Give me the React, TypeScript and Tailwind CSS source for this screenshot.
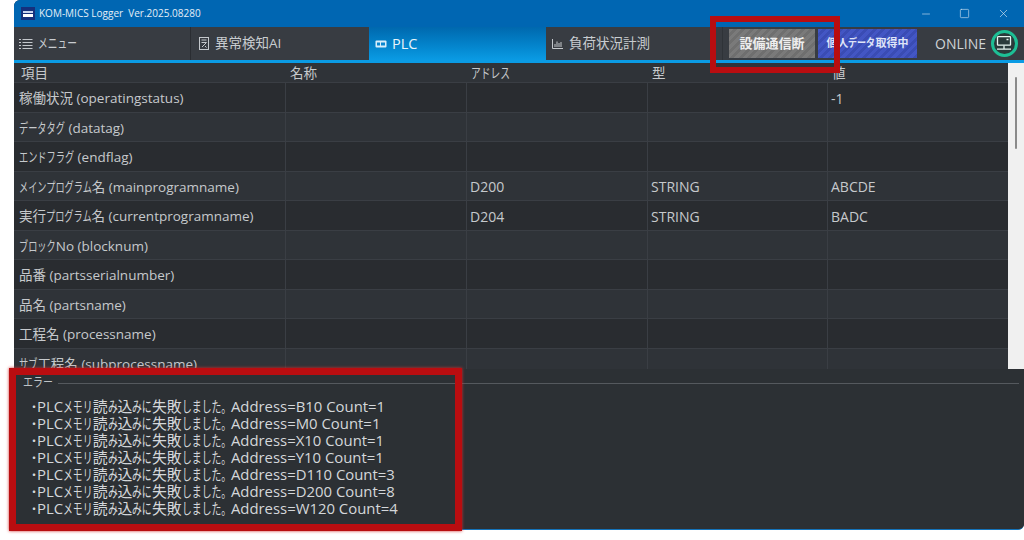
import { Minus, Square, X } from 'lucide-react';

const rows = [
  { label: '稼働状況 (operatingstatus)', addr: '', type: '', value: '-1' },
  { label: 'データタグ (datatag)', addr: '', type: '', value: '' },
  { label: 'エンドフラグ (endflag)', addr: '', type: '', value: '' },
  { label: 'メインプログラム名 (mainprogramname)', addr: 'D200', type: 'STRING', value: 'ABCDE' },
  { label: '実行プログラム名 (currentprogramname)', addr: 'D204', type: 'STRING', value: 'BADC' },
  { label: 'ブロックNo (blocknum)', addr: '', type: '', value: '' },
  { label: '品番 (partsserialnumber)', addr: '', type: '', value: '' },
  { label: '品名 (partsname)', addr: '', type: '', value: '' },
  { label: '工程名 (processname)', addr: '', type: '', value: '' },
  { label: 'サブ工程名 (subprocessname)', addr: '', type: '', value: '' },
];

const errors = [
  'Address=B10 Count=1',
  'Address=M0 Count=1',
  'Address=X10 Count=1',
  'Address=Y10 Count=1',
  'Address=D110 Count=3',
  'Address=D200 Count=8',
  'Address=W120 Count=4',
];

const gridCols = 'grid grid-cols-[271px_181px_181px_180px_181px]';

// the original UI font has narrow kana, so kana runs get squeezed sideways
function Jp({ text, ratio = 0.68 }: { text: string; ratio?: number }) {
  return (
    <>
      {text.split(/([ぁ-んァ-ヶー。]+)/).map((part, i) =>
        i % 2 === 1 ? (
          <span
            key={i}
            className="inline-block origin-left"
            style={{ transform: `scaleX(${ratio})`, marginRight: `${-part.length * (1 - ratio)}em` }}
          >
            {part}
          </span>
        ) : (
          part
        )
      )}
    </>
  );
}

function MenuIcon() {
  return (
    <svg width="14" height="12" viewBox="0 0 14 12" fill="none" stroke="#c4c8cc" strokeWidth="1">
      <path d="M0 1.5h2M0 4.5h2M0 7.5h2M0 10.5h2M3.5 1.5h10M3.5 4.5h10M3.5 7.5h10M3.5 10.5h10" />
    </svg>
  );
}

function AiIcon() {
  return (
    <svg width="10" height="13" viewBox="0 0 10 13" fill="none" stroke="#c4c8cc" strokeWidth="1">
      <rect x="0.5" y="0.5" width="9" height="12" />
      <path d="M2.5 3h5M2.5 5.5h5L3 10M6 9l1.5 1.5" />
    </svg>
  );
}

function PlcIcon() {
  return (
    <svg width="12" height="8" viewBox="0 0 12 8" fill="none">
      <rect x="0.5" y="0.5" width="11" height="7" rx="1" fill="#d8eefb" />
      <rect x="2" y="2.5" width="3" height="3" fill="#0a86cf" />
      <rect x="6" y="2.5" width="4" height="3" fill="#0a86cf" />
    </svg>
  );
}

function ChartIcon() {
  return (
    <svg width="11" height="10" viewBox="0 0 11 10" fill="none" stroke="#c4c8cc" strokeWidth="1">
      <path d="M0.5 0v9.5H11M3 8V5M5 8V2.5M7 8V4M9 8V3" />
    </svg>
  );
}

function NetworkIcon() {
  return (
    <svg width="16" height="15" viewBox="0 0 16 15" fill="none" stroke="#e6f5f0" strokeWidth="1.3">
      <rect x="1.5" y="0.7" width="13" height="8.5" rx="0.5" />
      <path d="M8 9.5V13M1 13.2h14M10.5 3.5h2" />
    </svg>
  );
}

export default function App() {
  return (
    <div className="relative w-[1024px] h-[540px] bg-white overflow-hidden font-['Open_Sans','Noto_Sans_CJK_JP',sans-serif]">
      <div className="ml-[14px] h-[530px] flex flex-col rounded-tl-md rounded-br-md overflow-hidden border-b border-[#1473ba] bg-[#2c3034]">
        {/* title bar */}
        <div className="h-[27px] shrink-0 flex items-center bg-[#0066b2] pl-[7px] text-white">
          <div className="w-[14px] h-[13px] bg-[#15307c] flex flex-col justify-center items-center gap-px">
            <div className="w-[10px] h-[2px] bg-[#c9d4ee]" />
            <div className="w-[10px] h-[3px] bg-white" />
          </div>
          <span className="ml-[4px] text-[10px] text-[#e4eef7] whitespace-pre">KOM-MICS Logger  Ver.2025.08280</span>
          <div className="ml-auto flex items-center gap-[27px] pr-[14px] text-[#d9e7f3]">
            <Minus size={12} strokeWidth={1.2} />
            <Square size={11} strokeWidth={1.3} />
            <X size={13} strokeWidth={1.2} />
          </div>
        </div>

        {/* tabs */}
        <div className="h-[33px] shrink-0 flex items-stretch bg-[#383c42]">
          <div className="w-[177px] flex items-center gap-[5px] pl-[5px] border-r border-[#2a2d32] text-[13.5px] text-[#c8ccd0]">
            <MenuIcon />
            <span><Jp text="メニュー" ratio={0.72} /></span>
          </div>
          <div className="w-[178px] flex items-center gap-[6px] pl-[8px] text-[13.5px] text-[#c8ccd0]">
            <AiIcon />
            <span>異常検知AI</span>
          </div>
          <div className="w-[177px] flex items-center gap-[5px] pl-[6px] text-[14.5px] text-[#e8f4fb] bg-gradient-to-b from-[#0068ae] to-[#0a9be4]">
            <PlcIcon />
            <span>PLC</span>
          </div>
          <div className="w-[177px] flex items-center gap-[6px] pl-[6px] border-r border-[#2f3338] text-[13.5px] text-[#c8ccd0]">
            <ChartIcon />
            <span>負荷状況計測</span>
          </div>
          <div className="flex-1 flex items-center pl-[6px]">
            <div className="w-[86px] h-[29px] flex items-center justify-center text-[13px] font-bold text-[#eeeeee] bg-[repeating-linear-gradient(135deg,#7a7a7a_0px,#7a7a7a_3px,#6f6f6f_3px,#6f6f6f_6px)]">
              設備通信断
            </div>
            <div className="ml-[3px] w-[99px] h-[29px] flex items-center justify-center text-[11px] font-bold text-[#dfe4f8] bg-[repeating-linear-gradient(135deg,#4356c4_0px,#4356c4_3px,#3a4cb4_3px,#3a4cb4_6px)]">
              <span><Jp text="個人データ取得中" ratio={0.82} /></span>
            </div>
            <span className="ml-[18px] text-[14px] text-[#cfd3d6]">ONLINE</span>
            <div className="ml-[5px] w-[27px] h-[27px] rounded-full border-[3px] border-[#1dbf95] bg-[#2a3a3a] flex items-center justify-center">
              <NetworkIcon />
            </div>
          </div>
        </div>
        <div className="h-[3px] shrink-0 bg-[#0a9be4]" />

        {/* table */}
        <div className="h-[306px] shrink-0 flex overflow-hidden">
          <div className="w-[994px] shrink-0 text-[13.5px] text-[#c6c9cc]">
            <div className={`${gridCols} h-[20px] items-center bg-[#2f3338] border-b border-[#3a3e44]`}>
              <div className="pl-[7px]">項目</div>
              <div className="pl-[5px]">名称</div>
              <div className="pl-[5px]"><Jp text="アドレス" ratio={0.72} /></div>
              <div className="pl-[5px]">型</div>
              <div className="pl-[5px]">値</div>
            </div>
            {rows.map((row, i) => (
              <div
                key={row.label}
                className={`${gridCols} h-[29.5px] items-center border-b border-[#3a3e44] ${i % 2 === 0 ? 'bg-[#292c30]' : 'bg-[#2f3338]'}`}
              >
                <div className="pl-[5px] pt-[2px] h-full flex items-center whitespace-nowrap">
                  <span className="whitespace-pre"><Jp text={row.label} /></span>
                </div>
                <div className="h-full border-l border-[#3a3e44]" />
                <div className="pl-[3px] pt-[2px] text-[14px] h-full flex items-center border-l border-[#3a3e44]">{row.addr}</div>
                <div className="pl-[3px] pt-[2px] text-[14px] h-full flex items-center border-l border-[#3a3e44]">{row.type}</div>
                <div className="pl-[3px] pt-[2px] text-[14px] h-full flex items-center border-l border-[#3a3e44]">{row.value}</div>
              </div>
            ))}
          </div>
          <div className="flex-1 bg-[#f0f0f0] flex justify-center pt-[14px]">
            <div className="w-[2px] h-[72px] bg-[#8a8a8a] rounded-full" />
          </div>
        </div>

        {/* error panel */}
        <div className="flex-1 bg-[#2c3034] pt-[6px] pl-[9px] pr-[5px]">
          <div className="flex items-center gap-[5px] h-[16px]">
            <span className="text-[12px] text-[#bfc3c6]"><Jp text="エラー" ratio={0.83} /></span>
            <div className="flex-1 h-px bg-[#55595e]" />
          </div>
          <ul className="mt-[7px] pl-[5px] text-[14.9px] leading-[17px] text-[#d4d7da]">
            {errors.map(e => (
              <li key={e} className="whitespace-pre h-[17px]">
                <span className="inline-block w-[9px] text-[12px]">・</span>
                <Jp text={`PLCメモリ読み込みに失敗しました。${e}`} ratio={0.66} />
              </li>
            ))}
          </ul>
        </div>
      </div>

      {/* annotation boxes */}
      <div className="absolute left-[710px] top-[16px] w-[130px] h-[57px] border-[6px] border-[#b90d10]" />
      <div className="absolute left-[9px] top-[368px] w-[453px] h-[163px] border-[7px] border-[#b90d10] shadow-[0_0_3px_#d03030]" />
    </div>
  );
}
